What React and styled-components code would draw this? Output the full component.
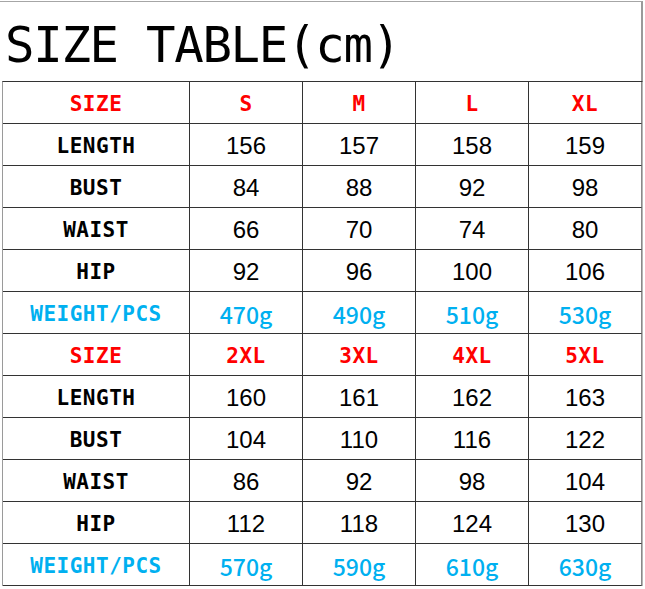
import React from 'react';
import styled, { createGlobalStyle } from 'styled-components';

const blocks = [
  {
    sizes: ['S', 'M', 'L', 'XL'],
    rows: [
      ['LENGTH', '156', '157', '158', '159'],
      ['BUST', '84', '88', '92', '98'],
      ['WAIST', '66', '70', '74', '80'],
      ['HIP', '92', '96', '100', '106'],
    ],
    weights: ['470g', '490g', '510g', '530g'],
  },
  {
    sizes: ['2XL', '3XL', '4XL', '5XL'],
    rows: [
      ['LENGTH', '160', '161', '162', '163'],
      ['BUST', '104', '110', '116', '122'],
      ['WAIST', '86', '92', '98', '104'],
      ['HIP', '112', '118', '124', '130'],
    ],
    weights: ['570g', '590g', '610g', '630g'],
  },
];

const GlobalStyle = createGlobalStyle`
  html, body {
    margin: 0;
    padding: 0;
    background: #fff;
  }
  body {
    font-family: "DejaVu Sans Mono", monospace;
  }
`;

const tones = {
  black: '#000',
  red: '#ff0000',
  blue: '#00b0f0',
};

const App = () => (
  <>
    <GlobalStyle />
    <StyledSheet>
      <StyledTitle>SIZE TABLE(cm)</StyledTitle>
      <StyledGrid>
        {blocks.map((block, i) => (
          <React.Fragment key={i}>
            <StyledLabel tone="red">SIZE</StyledLabel>
            {block.sizes.map(size => (
              <StyledLabel key={size} tone="red">
                {size}
              </StyledLabel>
            ))}
            {block.rows.map(([name, ...values]) => (
              <React.Fragment key={name}>
                <StyledLabel tone="black">{name}</StyledLabel>
                {values.map((v, j) => (
                  <StyledNumber key={j}>{v}</StyledNumber>
                ))}
              </React.Fragment>
            ))}
            <StyledLabel tone="blue">WEIGHT/PCS</StyledLabel>
            {block.weights.map(w => (
              <StyledWeight key={w}>{w}</StyledWeight>
            ))}
          </React.Fragment>
        ))}
      </StyledGrid>
    </StyledSheet>
  </>
);

const StyledSheet = styled.div`
  width: 645px;
  padding-top: 1px;
`;

const StyledTitle = styled.div`
  box-sizing: border-box;
  width: 643px;
  height: 80px;
  border-top: 1px solid #a6a6a6;
  border-right: 2px solid #9a9a9a;
  padding: 8px 0 0 5px;
  display: flex;
  align-items: center;
  font-family: "DejaVu Sans Mono", monospace;
  font-size: 49px;
  letter-spacing: -1.3px;
  color: #000;
  white-space: nowrap;
`;

const StyledGrid = styled.div`
  margin-left: 2px;
  width: 641px;
  display: grid;
  grid-template-columns: 187px repeat(4, 113px);
  grid-auto-rows: 42px;
  border-top: 1px solid #333;
  border-left: 1px solid #9a9a9a;
  border-right: 1px solid #b5b5b5;
  box-sizing: border-box;
`;

const StyledCell = styled.div`
  box-sizing: border-box;
  display: flex;
  align-items: center;
  justify-content: center;
  padding-top: 2px;
  border-right: 1px solid #333;
  border-bottom: 1px solid #333;
  white-space: nowrap;

  &:nth-child(5n) {
    border-right-color: #8a8a8a;
  }
`;

const StyledLabel = styled(StyledCell)`
  font-family: "DejaVu Sans Mono", monospace;
  font-weight: bold;
  font-size: 21px;
  letter-spacing: 0.5px;
  color: ${({ tone }) => tones[tone]};
`;

const StyledNumber = styled(StyledCell)`
  font-family: "Liberation Sans", Arial, sans-serif;
  font-size: 24px;
  color: #000;
`;

const StyledWeight = styled(StyledCell)`
  font-family: "Noto Sans CJK SC", "Noto Sans", sans-serif;
  font-weight: 500;
  font-size: 23px;
  color: ${tones.blue};
`;

export default App;
